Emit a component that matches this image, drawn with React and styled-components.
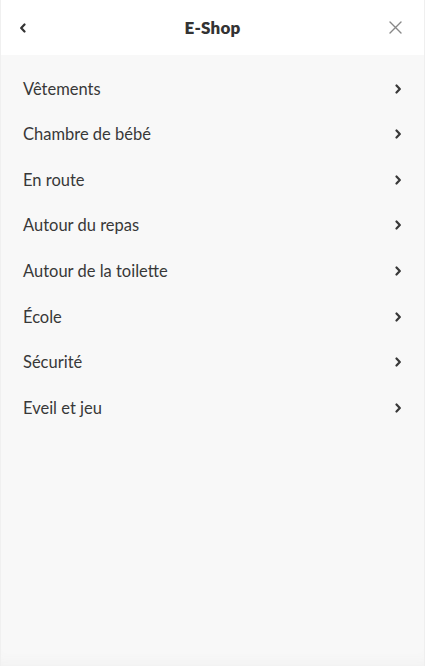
import React from 'react'
import styled, { createGlobalStyle } from 'styled-components'

const GlobalStyle = createGlobalStyle`
  html, body {
    margin: 0;
    padding: 0;
    height: 100%;
  }
  body {
    font-family: Lato, "Noto Sans", sans-serif;
    background: #f8f8f8;
  }
  #root {
    height: 100%;
  }
`

const Panel = styled.div`
  height: 666px;
  display: flex;
  flex-direction: column;
  background: #f8f8f8;
  border-left: 1px solid #f0f0f0;
  border-right: 1px solid #efefef;
  box-sizing: border-box;
  box-shadow: inset 0 -12px 16px -12px #eeeeee;
`

const Header = styled.header`
  height: 55px;
  flex-shrink: 0;
  display: grid;
  grid-template-columns: 46px 1fr 46px;
  align-items: center;
  background: #fff;
`

const IconButton = styled.button`
  border: 0;
  background: none;
  padding: 0;
  height: 100%;
  display: flex;
  align-items: center;
  justify-content: ${(p) => (p.$end ? 'flex-end' : 'flex-start')};
  padding-left: ${(p) => (p.$end ? '0' : '18px')};
  padding-right: ${(p) => (p.$end ? '22px' : '0')};
  color: ${(p) => p.$color || '#333'};
  cursor: pointer;
`

const Title = styled.h1`
  margin: 0;
  text-align: center;
  font-size: 17px;
  font-weight: 800;
  color: #333;
  letter-spacing: 0.2px;
`

const List = styled.ul`
  list-style: none;
  margin: 0;
  padding: 11px 0 0;
`

const Row = styled.li`
  height: 45.55px;
  display: flex;
  align-items: center;
  justify-content: space-between;
  padding: 0 22px 0 22px;
  font-size: 16.5px;
  color: #383838;
`

const Chevron = ({ left }) => (
  <svg width="8" height="10" viewBox="0 0 8 10" fill="none">
    <path
      d={left ? 'M5.5 1.5 L2.2 5 L5.5 8.5' : 'M2.5 1.5 L5.8 5 L2.5 8.5'}
      stroke="currentColor"
      strokeWidth="2.2"
      strokeLinecap="round"
      strokeLinejoin="round"
    />
  </svg>
)

const Close = () => (
  <svg width="13" height="13" viewBox="0 0 13 13" fill="none">
    <path d="M1 1 L12 12 M12 1 L1 12" stroke="currentColor" strokeWidth="1.4" strokeLinecap="round" />
  </svg>
)

const categories = [
  'Vêtements',
  'Chambre de bébé',
  'En route',
  'Autour du repas',
  'Autour de la toilette',
  'École',
  'Sécurité',
  'Eveil et jeu',
]

export default function App() {
  return (
    <>
      <GlobalStyle />
      <Panel>
        <Header>
          <IconButton aria-label="Retour">
            <Chevron left />
          </IconButton>
          <Title>E-Shop</Title>
          <IconButton $end $color="#888" aria-label="Fermer">
            <Close />
          </IconButton>
        </Header>
        <List>
          {categories.map((c) => (
            <Row key={c}>
              <span>{c}</span>
              <Chevron />
            </Row>
          ))}
        </List>
      </Panel>
    </>
  )
}
